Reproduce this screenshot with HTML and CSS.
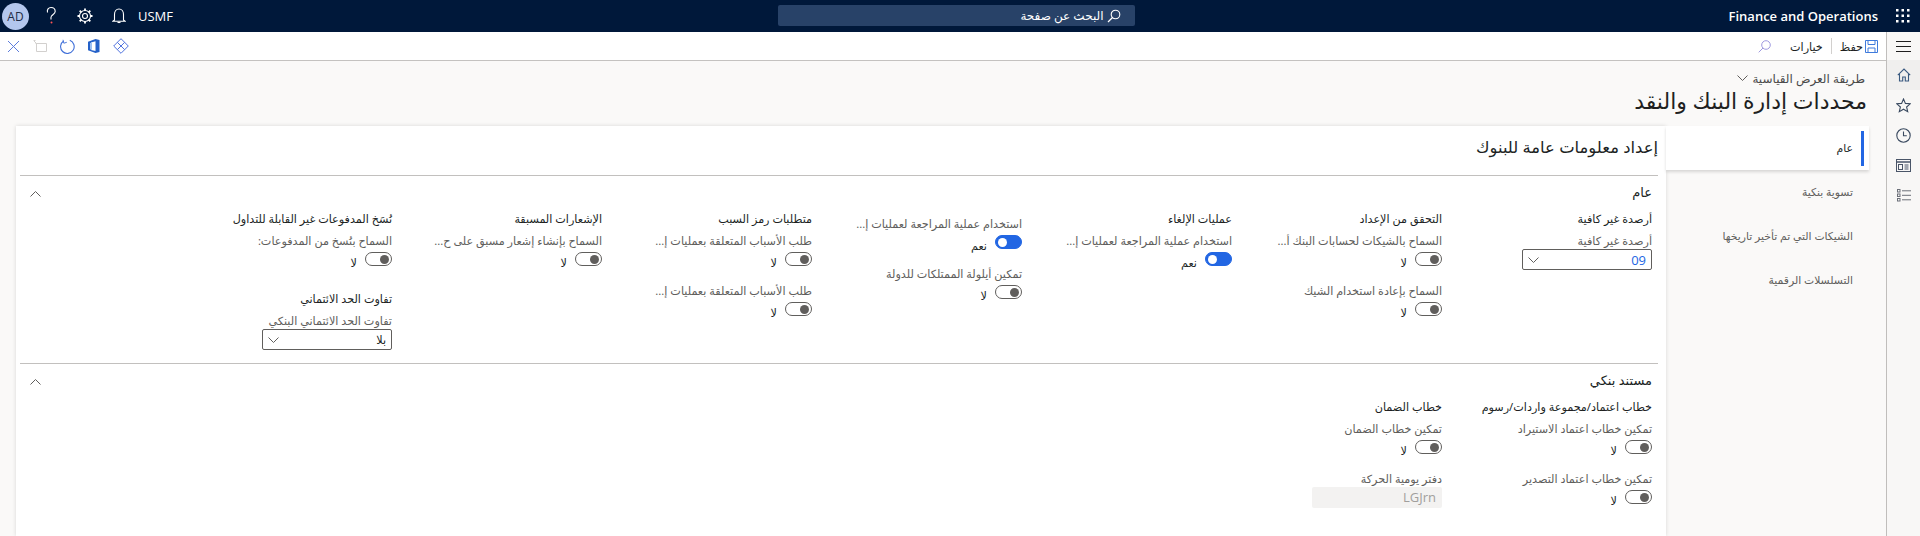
FILE: index.html
```html
<!DOCTYPE html>
<html lang="ar" dir="rtl">
<head>
<meta charset="utf-8">
<title>محددات إدارة البنك والنقد</title>
<link rel="stylesheet" href="styles.css">
</head>
<body>
<header class="topbar" dir="ltr">
  <div class="top-left">
    <span class="avatar">AD</span>
    <svg class="top-icon help" width="16" height="20" viewBox="0 0 16 20"><path d="M4.500 6.500C3.800 3.500 5.500 1.500 8 1.500s4.200 1.800 4.200 4c0 2.200-2.700 3.200-3.700 4.500-.6.800-.7 2-.5 3.500" fill="none" stroke="#fff" stroke-width="1.100"/><circle cx="8.500" cy="16.500" r="1" fill="#f55"/></svg>
    <svg class="top-icon gear" width="16" height="16" viewBox="0 0 16 16"><circle cx="8" cy="8" r="2.500" fill="none" stroke="#fff" stroke-width="1.100"/><circle cx="8" cy="8" r="5.500" fill="none" stroke="#fff" stroke-width="1.100"/><path d="M8 .5v2.500M8 13v2.500M.5 8H3M13 8h2.500M2.700 2.700l1.800 1.800M11.500 11.500l1.800 1.800M13.300 2.700l-1.800 1.800M4.500 11.500l-1.800 1.800" stroke="#fff" stroke-width="1.800"/></svg>
    <svg class="top-icon bell" width="14" height="16" viewBox="0 0 14 16"><path d="M2.500 12V6.500C2.500 3.500 4.300 1 7 1s4.500 2.500 4.500 5.500V12l1.500 1.200H1z" fill="none" stroke="#fff" stroke-width="1.100"/><path d="M5.500 14.500h3" stroke="#fff" stroke-width="1.100"/></svg>
    <span class="company">USMF</span>
  </div>
  <div class="page-search">
    <span class="page-search-text" dir="rtl">البحث عن صفحة</span>
    <svg width="14" height="14" viewBox="0 0 14 14"><circle cx="8.500" cy="5.500" r="4.300" fill="none" stroke="#fff" stroke-width="1.100"/><path d="M5.500 8.500L1 13" stroke="#fff" stroke-width="1.200"/></svg>
  </div>
  <div class="top-right">
    <span class="product">Finance and Operations</span>
    <svg class="waffle" width="14" height="14" viewBox="0 0 14 14" fill="#fff"><rect x="0" y="0" width="2.500" height="2.500"/><rect x="5.500" y="0" width="2.500" height="2.500"/><rect x="11" y="0" width="2.500" height="2.500"/><rect x="0" y="5.500" width="2.500" height="2.500"/><rect x="5.500" y="5.500" width="2.500" height="2.500"/><rect x="11" y="5.500" width="2.500" height="2.500"/><rect x="0" y="11" width="2.500" height="2.500"/><rect x="5.500" y="11" width="2.500" height="2.500"/><rect x="11" y="11" width="2.500" height="2.500"/></svg>
  </div>
</header>
<div class="shell">
  <nav class="rail">
    <div class="rail-item rail-menu"><svg width="15" height="12" viewBox="0 0 15 12" stroke="#201f1f" stroke-width="1"><path d="M0 1.500h15M0 6.500h15M0 11.500h15"/></svg></div>
    <div class="rail-item rail-current"><svg width="14" height="14" viewBox="0 0 14 14" fill="none" stroke="#3a5a80" stroke-width="1.100"><path d="M.8 7.200L7 1l6.200 6.200M2.500 6v7h3.200V9h2.600v4h3.200V6"/></svg></div>
    <div class="rail-item"><svg width="15" height="15" viewBox="0 0 15 15" fill="none" stroke="#3a4a60" stroke-width="1.100"><path d="M7.500 1l1.900 4.400 4.800.4-3.600 3.200 1.100 4.700-4.200-2.500-4.200 2.500 1.100-4.700L.8 5.800l4.800-.4z"/></svg></div>
    <div class="rail-item"><svg width="15" height="15" viewBox="0 0 15 15" fill="none" stroke="#3a4a60" stroke-width="1.100"><circle cx="7.500" cy="7.500" r="6.700"/><path d="M7.500 3.500v4.300h3.300"/></svg></div>
    <div class="rail-item"><svg width="15" height="13" viewBox="0 0 15 13" fill="none" stroke="#4a5568" stroke-width="1"><rect x=".5" y=".5" width="14" height="12"/><path d="M.5 3h14" stroke-width="1.500"/><rect x="2.500" y="5.500" width="4" height="5"/><path d="M8.500 6h4M8.500 8h4M8.500 10h4"/></svg></div>
    <div class="rail-item"><svg width="14" height="13" viewBox="0 0 14 13" fill="none" stroke="#6b6f78" stroke-width="1"><rect x=".5" y=".5" width="2.500" height="2.500"/><rect x=".5" y="5" width="2.500" height="2.500"/><rect x=".5" y="9.500" width="2.500" height="2.500"/><path d="M5 1.800h9M5 6.300h9M5 10.800h9"/></svg></div>
  </nav>
  <main class="workspace">
    <div class="toolbar" dir="ltr">
      <div class="tool-left">
        <svg width="13" height="13" viewBox="0 0 13 13" stroke="#5c7cdc" stroke-width="1" fill="none"><path d="M1 1l11 11M12 1L1 12"/></svg>
        <svg width="14" height="12" viewBox="0 0 14 12" stroke="#d2d0ce" stroke-width="1" fill="none"><path d="M2.500 3.500h11v8h-10v-8M.5.500l3 3M2.500.5H1"/></svg>
        <svg width="15" height="15" viewBox="0 0 15 15" fill="none" stroke="#3f6fd8" stroke-width="1.100"><path d="M9.800 1.300A6.800 6.800 0 1 1 3.600 2"/><path d="M3 .8l.8 3.400 3-.9" stroke-width=".9"/></svg>
        <svg width="12" height="14" viewBox="0 0 12 14"><path d="M7.500 0L0 2.700v8.500L7.500 14l4-1V1z" fill="#2461c9"/><path d="M7.500 2.200v9.800L3 11V3.600z" fill="#fff"/><path d="M4 3.400v7.500l-2-.6V4.100z" fill="#9cc0f3"/></svg>
        <svg width="16" height="16" viewBox="0 0 16 16" fill="none" stroke="#4f72de" stroke-width="1"><path d="M8 .7L15.300 8 8 15.300.7 8zM4.400 4.400l7.200 7.200M11.600 4.400L4.400 11.600"/></svg>
      </div>
      <div class="tool-right">
        <svg class="tool-find" width="13" height="13" viewBox="0 0 13 13" fill="none" stroke="#9f9ae0" stroke-width="1"><circle cx="8" cy="5" r="4.300"/><path d="M5 8l-4.300 4.300"/></svg>
        <span class="tool-text">خيارات</span>
        <span class="tool-sep"></span>
        <span class="tool-text">حفظ</span>
        <svg class="tool-save" width="13" height="13" viewBox="0 0 13 13" fill="none" stroke="#3f7bdc" stroke-width="1"><path d="M.5.500h12v12H.5z"/><path d="M3 .5v4h7v-4M3 12.500V8h7v4.500"/></svg>
      </div>
    </div>
    <div class="page">
      <div class="crumb"><span>طريقة العرض القياسية</span><svg width="11" height="6" viewBox="0 0 11 6" fill="none" stroke="#605e5c"><path d="M.5.500l5 5 5-5"/></svg></div>
      <h1 class="page-title">محددات إدارة البنك والنقد</h1>
      <div class="card">
        <ul class="tabs">
          <li class="tab tab-active">عام</li>
          <li class="tab">تسوية بنكية</li>
          <li class="tab">الشيكات التي تم تأخير تاريخها</li>
          <li class="tab">التسلسلات الرقمية</li>
        </ul>
        <section class="panel">
          <h2 class="panel-title">إعداد معلومات عامة للبنوك</h2>
          <div class="section">
            <div class="section-head"><span>عام</span><svg width="11" height="6" viewBox="0 0 11 6" fill="none" stroke="#605e5c"><path d="M.5 5.500l5-5 5 5"/></svg></div>
            <div class="columns">
              <div class="col">
                <div class="group-title">أرصدة غير كافية</div>
                <div class="label">أرصدة غير كافية</div>
                <div class="combo"><span class="combo-value link">09</span><svg width="11" height="6" viewBox="0 0 11 6" fill="none" stroke="#605e5c"><path d="M.5.500l5 5 5-5"/></svg></div>
              </div>
              <div class="col">
                <div class="group-title">التحقق من الإعداد</div>
                <div class="field"><div class="label">السماح بالشيكات لحسابات البنك أ...</div><div class="toggle-row"><span class="toggle"></span><span class="toggle-text">لا</span></div></div>
                <div class="field"><div class="label">السماح بإعادة استخدام الشيك</div><div class="toggle-row"><span class="toggle"></span><span class="toggle-text">لا</span></div></div>
              </div>
              <div class="col">
                <div class="group-title">عمليات الإلغاء</div>
                <div class="field"><div class="label">استخدام عملية المراجعة لعمليات إ...</div><div class="toggle-row"><span class="toggle toggle-on"></span><span class="toggle-text">نعم</span></div></div>
              </div>
              <div class="col col-untitled">
                <div class="field"><div class="label">استخدام عملية المراجعة لعمليات إ...</div><div class="toggle-row"><span class="toggle toggle-on"></span><span class="toggle-text">نعم</span></div></div>
                <div class="field"><div class="label">تمكين أيلولة الممتلكات للدولة</div><div class="toggle-row"><span class="toggle"></span><span class="toggle-text">لا</span></div></div>
              </div>
              <div class="col">
                <div class="group-title">متطلبات رمز السبب</div>
                <div class="field"><div class="label">طلب الأسباب المتعلقة بعمليات إ...</div><div class="toggle-row"><span class="toggle"></span><span class="toggle-text">لا</span></div></div>
                <div class="field"><div class="label">طلب الأسباب المتعلقة بعمليات إ...</div><div class="toggle-row"><span class="toggle"></span><span class="toggle-text">لا</span></div></div>
              </div>
              <div class="col">
                <div class="group-title">الإشعارات المسبقة</div>
                <div class="field"><div class="label">السماح بإنشاء إشعار مسبق على ح...</div><div class="toggle-row"><span class="toggle"></span><span class="toggle-text">لا</span></div></div>
              </div>
              <div class="col">
                <div class="group-title">نُسَخ المدفوعات غير القابلة للتداول</div>
                <div class="field"><div class="label">السماح بنُسخ من المدفوعات:</div><div class="toggle-row"><span class="toggle"></span><span class="toggle-text">لا</span></div></div>
                <div class="group-title group-later">تفاوت الحد الائتماني</div>
                <div class="label">تفاوت الحد الائتماني البنكي</div>
                <div class="combo"><span class="combo-value">بلا</span><svg width="11" height="6" viewBox="0 0 11 6" fill="none" stroke="#605e5c"><path d="M.5.500l5 5 5-5"/></svg></div>
              </div>
            </div>
          </div>
          <div class="section">
            <div class="section-head"><span>مستند بنكي</span><svg width="11" height="6" viewBox="0 0 11 6" fill="none" stroke="#605e5c"><path d="M.5 5.500l5-5 5 5"/></svg></div>
            <div class="columns">
              <div class="col">
                <div class="group-title">خطاب اعتماد/مجموعة واردات/رسوم</div>
                <div class="field"><div class="label">تمكين خطاب اعتماد الاستيراد</div><div class="toggle-row"><span class="toggle"></span><span class="toggle-text">لا</span></div></div>
                <div class="field"><div class="label">تمكين خطاب اعتماد التصدير</div><div class="toggle-row"><span class="toggle"></span><span class="toggle-text">لا</span></div></div>
              </div>
              <div class="col">
                <div class="group-title">خطاب الضمان</div>
                <div class="field"><div class="label">تمكين خطاب الضمان</div><div class="toggle-row"><span class="toggle"></span><span class="toggle-text">لا</span></div></div>
                <div class="label">دفتر يومية الحركة</div>
                <div class="readonly">LGJrn</div>
              </div>
            </div>
          </div>
        </section>
      </div>
    </div>
  </main>
</div>
</body>
</html>
```
FILE: styles.css
```css
* { box-sizing: border-box; }
html, body { margin: 0; height: 536px; overflow: hidden; }
body {
  font-family: "Noto Sans", "DejaVu Sans", sans-serif;
  font-size: 11.2px;
  color: #201f1f;
  background: #faf9f8;
}
.topbar {
  height: 32px;
  background: #00183a;
  color: #fff;
  display: grid;
  grid-template-columns: 1fr 357px 1fr;
  align-items: center;
  padding: 0 10px 0 2px;
}
.top-left { display: flex; align-items: center; }
.avatar {
  width: 27px; height: 27px; border-radius: 50%;
  background: #b4c7ee; color: #1f2b44;
  display: flex; align-items: center; justify-content: center;
  font: 12px "Open Sans", sans-serif;
}
.help { margin-left: 14px; }
.gear { margin-left: 18px; }
.bell { margin-left: 19px; }
.company { margin-left: 12px; font: 13px "Open Sans", sans-serif; }
.page-search {
  height: 21px; margin-top: -1px;
  background: #284268; border-radius: 2px;
  display: flex; align-items: center; justify-content: flex-end;
  gap: 3px; padding-right: 14px;
  font-size: 12px;
}
.top-right { display: flex; align-items: center; justify-content: flex-end; gap: 18px; }
.product { font: 600 13px "Open Sans", sans-serif; }
.shell { display: flex; height: 504px; }
.rail {
  width: 34px; flex: none;
  border-left: 1px solid #c0bebc;
  background: #f8f7f6;
}
.rail-item { height: 30px; display: flex; align-items: center; justify-content: center; }
.rail-menu { height: 28px; }
.rail-current { background: #f0efee; }
.workspace { flex: 1; min-width: 0; display: flex; flex-direction: column; }
.toolbar {
  height: 29px; flex: none;
  background: #fff;
  border-bottom: 1px solid #c4c2c0;
  display: flex; align-items: center; justify-content: space-between;
  padding: 0 8px 0 7px;
}
.tool-left { display: flex; align-items: center; gap: 13px; }
.tool-right { display: flex; align-items: center; }
.tool-find { margin-right: 19px; }
.tool-sep { width: 1px; height: 16px; background: #d2d0ce; margin: 0 8px; }
.tool-save { margin-left: 2px; }
.page { flex: 1; min-height: 0; padding: 8px 0 0 16px; display: flex; flex-direction: column; }
.crumb { height: 18px; padding-right: 21px; display: flex; align-items: center; gap: 4px; color: #4a4a4a; font-size: 12px; }
.page-title { margin: 0 19px 11px 0; height: 28px; font-size: 22px; line-height: 26px; font-weight: 400; }
.card { flex: 1; min-height: 0; display: flex; margin-right: 17px; }
.tabs {
  width: 203px; flex: none; margin: 0; padding: 0; list-style: none;
  color: #605e5c; font-size: 10.800px;
}
.tab { height: 44px; line-height: 44px; padding-right: 16px; white-space: nowrap; }
.tab-active {
  background: #fff; color: #201f1f;
  position: relative;
  box-shadow: 0 2px 3px rgba(0,0,0,.14);
}
.tab-active::before {
  content: ""; position: absolute; right: 5px; top: 5px; bottom: 4px; width: 3px; background: #2266e3;
}
.panel { flex: 1; min-width: 0; background: #fff; box-shadow: 0 0 4px rgba(0,0,0,.14); padding: 0 8px 0 4px; }
.panel-title { margin: 0; height: 49px; padding-top: 1px; font-size: 16.400px; line-height: 40px; font-weight: 400; }
.section { border-top: 1px solid #c2c0be; padding: 0 6px 13px 0; }
.section-head {
  height: 35px; display: flex; align-items: center; justify-content: space-between;
  padding-left: 10px; color: #201f1f; font-size: 13px;
}
.section-head span { padding-bottom: 3px; }
.columns { display: grid; grid-template-columns: repeat(7, 210px); justify-content: start; }
.col-untitled { padding-top: 4px; }
.group-title { height: 21px; line-height: 16px; color: #201f1f; white-space: nowrap; }
.group-later { margin-top: 9px; }
.label { height: 18px; line-height: 18px; color: #605e5c; white-space: nowrap; }
.field { height: 50px; }
.toggle-row { display: flex; gap: 8px; padding-top: 2px; }
.toggle {
  width: 27px; height: 14px; border: 1px solid #605e5c; border-radius: 7px;
  display: flex; align-items: center; justify-content: flex-start;
  padding: 0 2px;
}
.toggle::after { content: ""; width: 9px; height: 9px; border-radius: 50%; background: #605e5c; }
.toggle-on { background: #2266e3; border-color: #2266e3; justify-content: flex-end; }
.toggle-on::after { background: #fff; }
.toggle-text { line-height: 20px; margin-top: 1px; }
.combo {
  width: 130px; height: 21px; margin-top: -1px;
  border: 1px solid #605e5c; border-radius: 2px;
  display: flex; align-items: center; justify-content: space-between;
  padding: 0 5px;
}
.link { color: #2266e3; font: 13px "Open Sans", sans-serif; }
.readonly {
  width: 130px; height: 21px; margin-top: -1px;
  background: #f3f2f1; border-radius: 2px; color: #a19f9d;
  padding: 0 6px; font: 13px/21px "Open Sans", sans-serif;
}
```
